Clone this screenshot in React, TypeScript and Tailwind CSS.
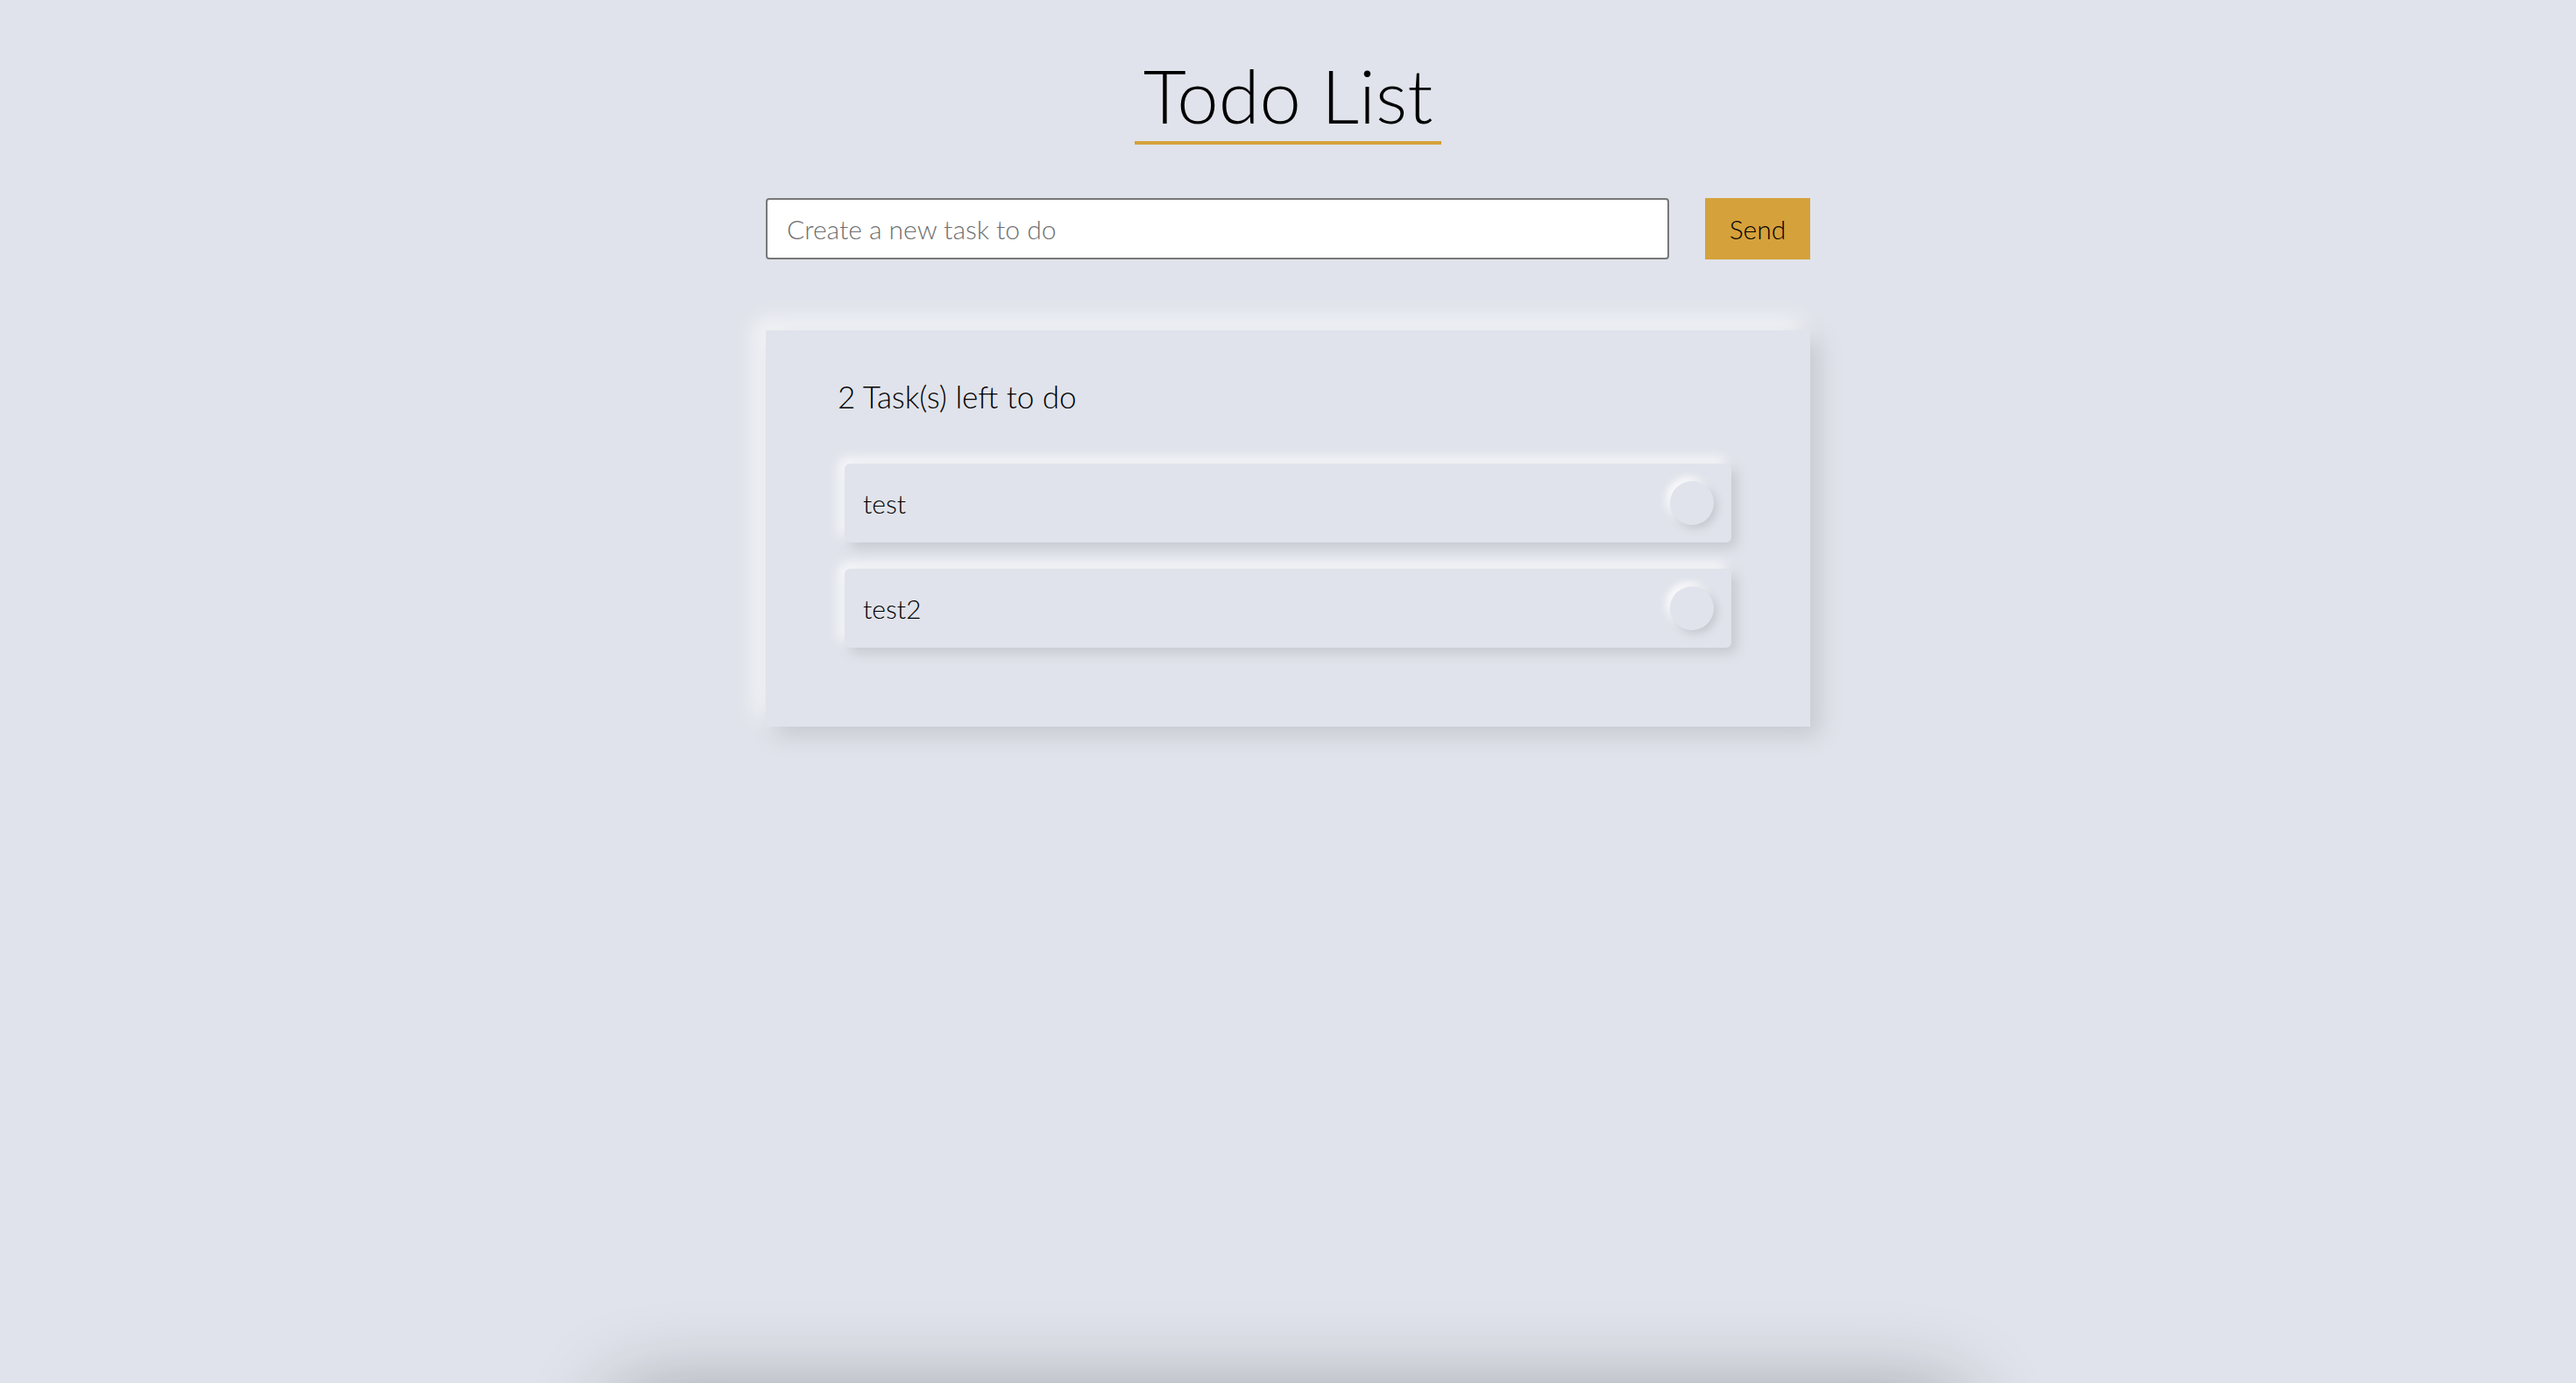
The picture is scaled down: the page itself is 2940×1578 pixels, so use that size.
import { useState } from 'react';

const initialTasks = [
  { id: 1, label: 'test' },
  { id: 2, label: 'test2' },
];

export default function App() {
  const [tasks] = useState(initialTasks);

  return (
    <div className="relative h-[1578px] overflow-hidden bg-[#e0e3eb] font-['Lato','Noto_Sans',sans-serif] font-light text-black">
      <div className="flex flex-col items-center pt-[66px]">
        {/* Title */}
        <h1 className="border-b-4 border-[#d5a13b] px-[10px] pb-[10px] text-[85px] font-light leading-none">Todo List</h1>

        {/* New task */}
        <form className="mt-[61px] flex w-[1192px] gap-[41px]" onSubmit={(e) => e.preventDefault()}>
          <input
            className="h-[70px] flex-1 rounded border-2 border-[#777] bg-white px-[22px] text-[30px] font-light text-black outline-none placeholder:text-[#6f6f6f]"
            placeholder="Create a new task to do"
          />
          <button type="submit" className="h-[70px] w-[120px] bg-[#d5a13b] text-[30px] font-light text-black">
            Send
          </button>
        </form>

        {/* Task list */}
        <section className="mt-[81px] w-[1192px] bg-[#e0e3eb] px-[82px] pt-[55px] pb-[90px] shadow-[10px_10px_25px_#c4c8cf,-10px_-10px_25px_rgba(255,255,255,0.85)]">
          <p className="h-[40px] text-[35px] leading-[40px] text-black">{tasks.length} Task(s) left to do</p>
          <ul className="mx-[8px] mt-[57px] flex flex-col gap-[30px]">
            {tasks.map((task) => (
              <li
                key={task.id}
                className="flex h-[90px] items-center justify-between rounded-md bg-[#e0e3eb] pl-[21px] pr-[20px] shadow-[6px_6px_14px_#c4c8cf,-6px_-6px_14px_rgba(255,255,255,0.9)]"
              >
                <span className="text-[30px] text-black">{task.label}</span>
                <button className="h-[50px] w-[50px] rounded-full bg-[#e0e3eb] shadow-[4px_4px_10px_#c4c8cf,-4px_-4px_10px_#ffffff]" />
              </li>
            ))}
          </ul>
        </section>
      </div>

      {/* shadow of the next block, just below the fold */}
      <div className="absolute left-[700px] top-[1590px] h-[200px] w-[1540px] rounded-3xl shadow-[0_0_100px_rgba(0,0,0,0.32)]" />
    </div>
  );
}
